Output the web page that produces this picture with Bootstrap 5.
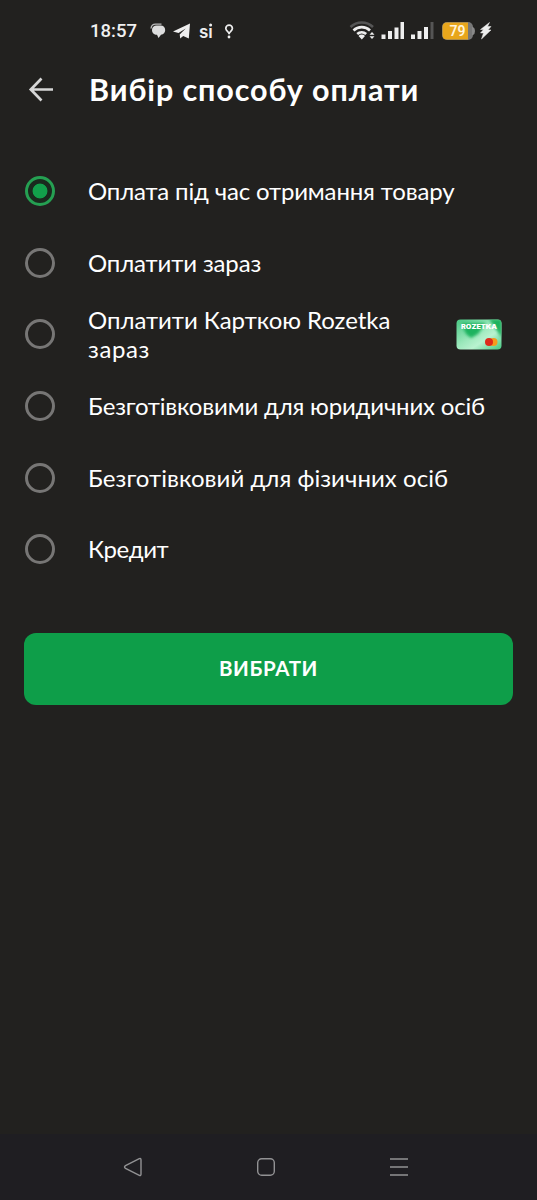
<!DOCTYPE html>
<html lang="uk" data-bs-theme="dark">
<head>
<meta charset="utf-8">
<meta name="viewport" content="width=device-width, initial-scale=1">
<title>Вибір способу оплати</title>
<link rel="stylesheet" href="https://cdn.jsdelivr.net/npm/bootstrap@5.3.0/dist/css/bootstrap.min.css">
<style>
  body { background: #22211f; color: #fff; font-family: Lato, "Noto Sans", sans-serif; }
  svg { display: block; flex: none; }
  .screen { height: 1200px; }
  .status { height: 60px; padding: 2px 0 0 90px; font-family: Roboto, sans-serif; }
  .clock { font-size: 18.5px; font-weight: 500; letter-spacing: 0; line-height: 22px; width: 60px; color: #f0f0f0; }
  .topbar { height: 60px; padding-left: 28px; }
  .topbar h1 { font-size: 30.5px; font-weight: 700; letter-spacing: .9px; line-height: 36px; margin: 0 0 3px 34px; white-space: nowrap; }
  .options { padding-top: 35.5px; }
  .option { height: 71.6px; padding: 0 35px 0 25px; background: none; }
  .option .form-check-input { width: 30px; height: 30px; border: 3px solid #777675; background: none; flex: none; box-shadow: none; }
  .option .form-check-input:checked { border-color: #25a052; background: radial-gradient(circle, #12a04b 7px, #1a2a1e 7.8px); }
  .option-text { margin: 0 0 1px 33px; font-size: 24px; line-height: 29px; white-space: nowrap; }
  .o1 { letter-spacing: -.16px; }
  .o2 { letter-spacing: -.14px; }
  .o3 { letter-spacing: -.04px; margin-bottom: 0; }
  .o3 span { letter-spacing: .6px; }
  .o4 { letter-spacing: -.18px; }
  .o5 { letter-spacing: .05px; }
  .o6 { letter-spacing: -.4px; }
  .choose { margin: 47.6px 24px 0; height: 72px; border-radius: 12px; background: #0e9e49; color: #fff; font-size: 20.5px; font-weight: 700; letter-spacing: .6px; }
  .sysnav { height: 66px; background: #1f1e22; padding: 0 128px 0 123px; }
</style>
</head>
<body>
<div class="screen d-flex flex-column">
  <div class="status d-flex align-items-center">
    <span class="clock">18:57</span>
    <svg width="387" height="30" viewBox="150 16 387 30" fill="#eee">
      <path d="M151 28.500q.5-4.300 4.500-4.300h6" fill="none" stroke="#bbb" stroke-width="1.300"/>
      <path d="M152 30c0-2.800 2-4.500 4.500-4.500h4c3 0 4.700 2 4.700 4.500s-1.700 4.500-4.200 4.800l-2.500 3.200-1.500-3.200c-3 0-5-2-5-4.800z" fill="#ddd"/>
      <path d="M173 31.500l17-8-1.200 15-5.600-2.600-3 2.600-.5-4 6-6-7.200 4.500z"/>
      <text x="199" y="38" font-family="Inter" font-size="17" font-weight="600">sı</text>
      <circle cx="210.600" cy="25" r="1.500"/>
      <path d="M229 33.500c0-1.500-3.200-2.600-3.200-5a3.300 3.300 0 0 1 6.600 0c0 2.400-3.200 3.500-3.200 5z" fill="none" stroke="#eee" stroke-width="1.700"/>
      <circle cx="229" cy="37" r="1.400"/>
      <path d="M350.500 27a16 16 0 0 1 22.500 0" fill="none" stroke="#555" stroke-width="2.500"/>
      <g fill="none" stroke="#eee" stroke-width="2.700"><path d="M353.500 30.500a12 12 0 0 1 16.500 0M357.200 34a7 7 0 0 1 9 0"/></g>
      <path d="M358.500 36a4.500 4.500 0 0 1 6.500 0l-3.200 3.500zM369.500 34.800l2.500-2.800 2.500 2.800zM369.500 36.300l2.500 2.800 2.500-2.800z"/>
      <path d="M381.500 34.500h4v4.500h-4zM388 31h4v8h-4zM394.500 27.500h4v11.500h-4zM400.500 22h3.500v17h-3.500zM411 34.500h4v4.500h-4zM417.500 31h4v8h-4zM424 27h4v12h-4z"/>
      <path d="M430.500 22h3v17h-3z" fill="#555"/>
      <rect x="442" y="22" width="31" height="18" rx="5" fill="#777"/>
      <path d="M472 27h1q2 1 2 4t-2 4h-1z" fill="#888"/>
      <path d="M447 22.500h21v17h-21q-4.500 0-4.500-4.500v-8q0-4.500 4.500-4.500z" fill="#e8a61c"/>
      <text x="449.500" y="36" font-size="14" font-weight="600" fill="#fff5dc">79</text>
      <path d="M489.500 22.500l-9 7h3l-3 3.500h3l-2 6 9.500-9h-3l3-3.500h-3.500z" stroke="#eee" stroke-width=".5"/>
    </svg>
  </div>

  <header class="topbar d-flex align-items-center">
    <svg width="27" height="26" viewBox="0 0 27 26" fill="none" stroke="#d6d6d6" stroke-width="2.700"><path d="M13.500 1.500L2.800 12.500 13.500 23.500M2.800 12.500H25"/></svg>
    <h1>Вибір способу оплати</h1>
  </header>

  <div class="options">
    <label class="option d-flex align-items-center"><input class="form-check-input m-0" type="radio" name="pay" checked><span class="option-text o1">Оплата під час отримання товару</span></label>
    <label class="option d-flex align-items-center"><input class="form-check-input m-0" type="radio" name="pay"><span class="option-text o2">Оплатити зараз</span></label>
    <label class="option d-flex align-items-center"><input class="form-check-input m-0" type="radio" name="pay"><span class="option-text o3">Оплатити Карткою Rozetka<br><span>зараз</span></span>
      <svg class="ms-auto" width="46" height="31" viewBox="0 0 46 31">
        <defs>
          <linearGradient id="cardfill" x1="0" y1="0" x2="1" y2="1"><stop offset="0" stop-color="#45c680"/><stop offset=".45" stop-color="#9be8bb"/><stop offset=".65" stop-color="#b9f2d0"/><stop offset="1" stop-color="#3fc77c"/></linearGradient>
          <filter id="soften"><feGaussianBlur stdDeviation="1.600"/></filter>
          <clipPath id="cardclip"><rect x=".5" y=".5" width="45" height="30" rx="4"/></clipPath>
        </defs>
        <g clip-path="url(#cardclip)">
          <rect width="46" height="31" fill="url(#cardfill)"/>
          <path d="M5 4h25l-8 11-7 4-5-4z M33 0h13v19z" fill="#1db35f" filter="url(#soften)"/>
        </g>
        <text x="5" y="9.500" font-family="Inter" font-size="6" font-weight="900" fill="#fff" textLength="36" lengthAdjust="spacingAndGlyphs">ROZETKA</text>
        <circle cx="37.500" cy="23" r="4" fill="#f59b1e"/><circle cx="33" cy="23" r="4" fill="#dd2a1b"/>
      </svg></label>
    <label class="option d-flex align-items-center"><input class="form-check-input m-0" type="radio" name="pay"><span class="option-text o4">Безготівковими для юридичних осіб</span></label>
    <label class="option d-flex align-items-center"><input class="form-check-input m-0" type="radio" name="pay"><span class="option-text o5">Безготівковий для фізичних осіб</span></label>
    <label class="option d-flex align-items-center"><input class="form-check-input m-0" type="radio" name="pay"><span class="option-text o6">Кредит</span></label>
  </div>

  <button class="btn choose" type="button">ВИБРАТИ</button>

  <nav class="sysnav mt-auto d-flex align-items-center justify-content-between">
    <svg width="20" height="20" viewBox="0 0 20 20" fill="none" stroke="#929294" stroke-width="1.400"><path d="M2.500 8.700L16.300 1.700q1.700-.7 1.700 1v14.600q0 1.700-1.700 1L2.500 11.300q-2-1.300 0-2.600z"/></svg>
    <svg width="20" height="20" viewBox="0 0 20 20" fill="none" stroke="#929294" stroke-width="1.400"><rect x="1.700" y="1.700" width="16.600" height="16.600" rx="4"/></svg>
    <svg width="20" height="20" viewBox="0 0 20 20" stroke="#929294" stroke-width="1.600"><path d="M1 2h18M1 10h18M1 18h18"/></svg>
  </nav>
</div>
<script src="https://cdn.jsdelivr.net/npm/bootstrap@5.3.0/dist/js/bootstrap.bundle.min.js"></script>
</body>
</html>
